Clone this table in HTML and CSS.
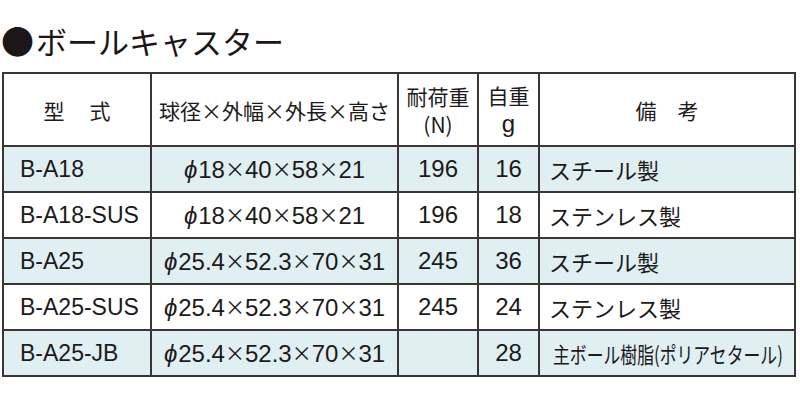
FILE: index.html
```html
<!DOCTYPE html>
<html lang="ja">
<head>
<meta charset="utf-8">
<link rel="stylesheet" href="styles.css">
</head>
<body>
<h1 class="title"><span class="dot">●</span>ボールキャスター</h1>
<table class="spec">
  <colgroup>
    <col class="c1"><col class="c2"><col class="c3"><col class="c4"><col class="c5">
  </colgroup>
  <thead>
    <tr>
      <th>型<span class="gap">　</span>式</th>
      <th>球径×外幅×外長×高さ</th>
      <th>耐荷重<br>(N)</th>
      <th>自重<br><span class="lat">g</span></th>
      <th>備　考</th>
    </tr>
  </thead>
  <tbody>
    <tr class="alt">
      <td class="model">B-A18</td>
      <td class="num"><span class="phi">ϕ</span>18<span class="x">×</span>40<span class="x">×</span>58<span class="x">×</span>21</td>
      <td class="num">196</td>
      <td class="num">16</td>
      <td class="note">スチール製</td>
    </tr>
    <tr>
      <td class="model">B-A18-SUS</td>
      <td class="num"><span class="phi">ϕ</span>18<span class="x">×</span>40<span class="x">×</span>58<span class="x">×</span>21</td>
      <td class="num">196</td>
      <td class="num">18</td>
      <td class="note">ステンレス製</td>
    </tr>
    <tr class="alt">
      <td class="model">B-A25</td>
      <td class="num"><span class="phi">ϕ</span>25.4<span class="x">×</span>52.3<span class="x">×</span>70<span class="x">×</span>31</td>
      <td class="num">245</td>
      <td class="num">36</td>
      <td class="note">スチール製</td>
    </tr>
    <tr>
      <td class="model">B-A25-SUS</td>
      <td class="num"><span class="phi">ϕ</span>25.4<span class="x">×</span>52.3<span class="x">×</span>70<span class="x">×</span>31</td>
      <td class="num">245</td>
      <td class="num">24</td>
      <td class="note">ステンレス製</td>
    </tr>
    <tr class="alt">
      <td class="model">B-A25-JB</td>
      <td class="num"><span class="phi">ϕ</span>25.4<span class="x">×</span>52.3<span class="x">×</span>70<span class="x">×</span>31</td>
      <td class="num"></td>
      <td class="num">28</td>
      <td class="note narrow"><span class="squeeze">主ボール樹脂(ポリアセタール)</span></td>
    </tr>
  </tbody>
</table>
</body>
</html>
```
FILE: styles.css
```css
html, body {
  margin: 0;
  padding: 0;
  background: #ffffff;
}
body {
  color: #1c1a1a;
  font-family: "Liberation Sans", "Noto Sans CJK JP", sans-serif;
}
.title {
  margin: 0 0 14px 1px;
  padding-top: 23px;
  font-family: "Noto Sans CJK JP", sans-serif;
  font-weight: 400;
  font-size: 31px;
  line-height: 34px;
  color: #1c1616;
}
.dot {
  display: inline-block;
  width: 35px;
  font-size: 33px;
  line-height: 34px;
}
.spec {
  margin-left: 2px;
  width: 792px;
  border-collapse: collapse;
  table-layout: fixed;
  border: 2px solid #262323;
}
.c1 { width: 148px; }
.c2 { width: 247px; }
.c3 { width: 80px; }
.c4 { width: 61px; }
.c5 { width: 256px; }
.spec th, .spec td {
  border: 2px solid #3a3636;
  padding: 0;
  overflow: hidden;
  white-space: nowrap;
}
.spec th {
  height: 71px;
  font-family: "Noto Sans CJK JP", sans-serif;
  font-weight: 400;
  font-size: 21px;
  line-height: 28px;
  text-align: center;
  color: #1c1a1a;
}
.spec th .lat {
  font-family: "Liberation Sans", sans-serif;
  font-size: 24px;
}
.gap {
  letter-spacing: 4px;
}
.spec td {
  height: 44px;
  font-size: 23px;
  line-height: 28px;
}
.alt td {
  background: #e0eff1;
}
.model {
  text-align: left;
  padding-left: 16px !important;
}
.num {
  text-align: center;
  font-size: 24px !important;
}
.phi {
  font-style: italic;
  margin-right: 1px;
}
.x {
  font-family: "Noto Sans CJK JP", sans-serif;
  font-size: 20px;
  vertical-align: 1px;
}
.note {
  text-align: left;
  padding-left: 9px !important;
  font-family: "Noto Sans CJK JP", sans-serif;
  font-size: 22px !important;
}
.note.narrow {
  padding-left: 13px !important;
}
.squeeze {
  display: inline-block;
  transform: scaleX(0.765);
  transform-origin: left center;
}
```
